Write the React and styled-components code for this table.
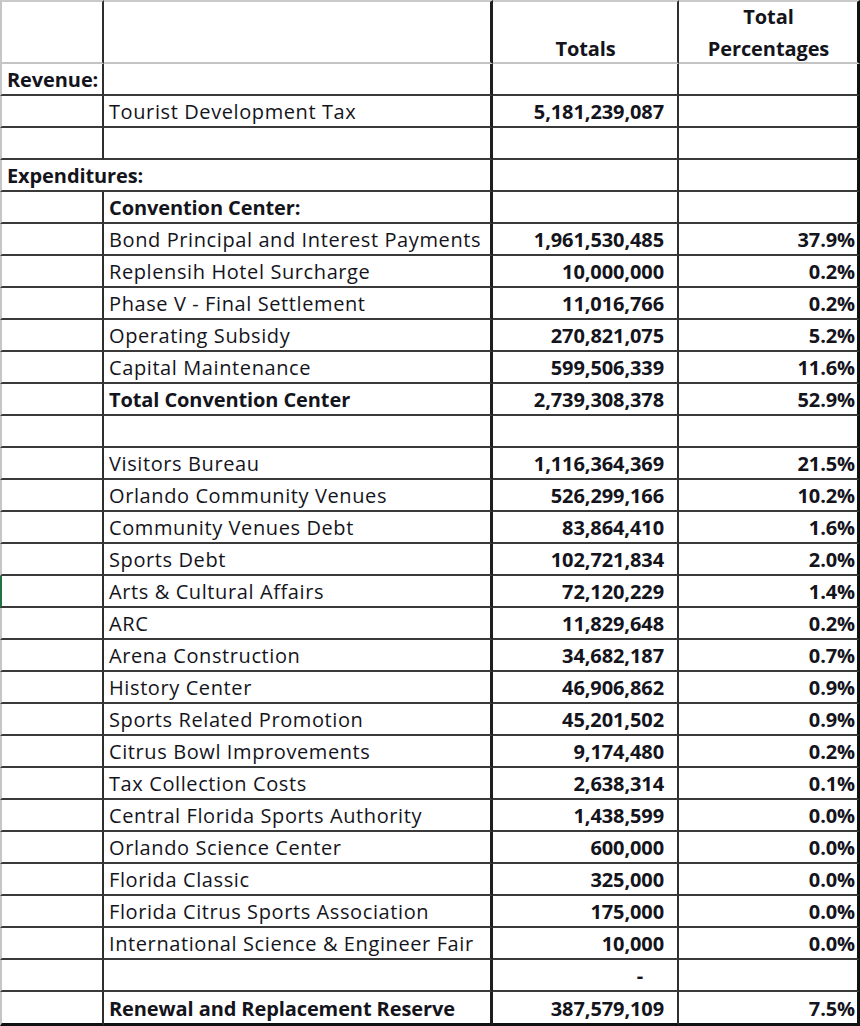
import React from "react";
import styled, { createGlobalStyle } from "styled-components";

const GlobalStyle = createGlobalStyle`
  html, body {
    margin: 0;
    padding: 0;
    background: #ffffff;
  }
`;

const RIGHT_RULES = {
  1: "2px solid #2e2e2e",
  2: "3px solid #1e1e1e",
  3: "2px solid #2e2e2e",
  4: "3px solid #111111",
};

const Sheet = styled.div`
  display: grid;
  grid-template-columns: 104px 389px 186px 181px;
  width: 860px;
  font-family: "Open Sans", Lato, sans-serif;
  font-size: 20px;
  color: #14141c;
`;

const Cell = styled.div`
  box-sizing: border-box;
  height: ${(p) => (p.$head ? 64 : p.$last ? 34 : 32)}px;
  grid-column: span ${(p) => p.$span || 1};
  display: flex;
  align-items: flex-end;
  justify-content: ${(p) =>
    p.$align === "right" ? "flex-end" : p.$align === "center" ? "center" : "flex-start"};
  text-align: ${(p) => p.$align || "left"};
  padding: 0 ${(p) => (p.$padRight != null ? p.$padRight : 4)}px 0 5px;
  font-weight: ${(p) => (p.$bold ? 700 : 400)};
  letter-spacing: ${(p) => (p.$bold ? "-0.1px" : "0.6px")};
  line-height: 29px;
  white-space: nowrap;
  border-right: ${(p) => RIGHT_RULES[p.$col]};
  border-left: ${(p) =>
    p.$col === 1 ? (p.$marker ? "2px solid #217346" : "2px solid #c6c6c6") : "none"};
  border-top: ${(p) => (p.$head ? "2px solid #cacaca" : "none")};
  border-bottom: ${(p) =>
    p.$head ? "2px solid #c4c4c4" : p.$last ? "3px solid #111111" : "2px solid #3a3a3a"};
`;

const HeadText = styled.span`
  line-height: 32px;
  font-weight: 700;
  letter-spacing: -0.1px;
  margin-bottom: -3px;
`;

const rows = [
  { type: "section", label: "Revenue:" },
  { label: "Tourist Development Tax", total: "5,181,239,087" },
  { type: "blank" },
  { type: "wide", label: "Expenditures:" },
  { label: "Convention Center:", bold: true },
  { label: "Bond Principal and Interest Payments", total: "1,961,530,485", pct: "37.9%" },
  { label: "Replensih Hotel Surcharge", total: "10,000,000", pct: "0.2%" },
  { label: "Phase V - Final Settlement", total: "11,016,766", pct: "0.2%" },
  { label: "Operating Subsidy", total: "270,821,075", pct: "5.2%" },
  { label: "Capital Maintenance", total: "599,506,339", pct: "11.6%" },
  { label: "Total Convention Center", bold: true, total: "2,739,308,378", pct: "52.9%" },
  { type: "blank" },
  { label: "Visitors Bureau", total: "1,116,364,369", pct: "21.5%" },
  { label: "Orlando Community Venues", total: "526,299,166", pct: "10.2%" },
  { label: "Community Venues Debt", total: "83,864,410", pct: "1.6%" },
  { label: "Sports Debt", total: "102,721,834", pct: "2.0%" },
  { label: "Arts & Cultural Affairs", total: "72,120,229", pct: "1.4%", marker: true },
  { label: "ARC", total: "11,829,648", pct: "0.2%" },
  { label: "Arena Construction", total: "34,682,187", pct: "0.7%" },
  { label: "History Center", total: "46,906,862", pct: "0.9%" },
  { label: "Sports Related Promotion", total: "45,201,502", pct: "0.9%" },
  { label: "Citrus Bowl Improvements", total: "9,174,480", pct: "0.2%" },
  { label: "Tax Collection Costs", total: "2,638,314", pct: "0.1%" },
  { label: "Central Florida Sports Authority", total: "1,438,599", pct: "0.0%" },
  { label: "Orlando Science Center", total: "600,000", pct: "0.0%" },
  { label: "Florida Classic", total: "325,000", pct: "0.0%" },
  { label: "Florida Citrus Sports Association", total: "175,000", pct: "0.0%" },
  { label: "International Science & Engineer Fair", total: "10,000", pct: "0.0%" },
  { type: "dash" },
  { label: "Renewal and Replacement Reserve", bold: true, total: "387,579,109", pct: "7.5%", last: true },
];

function Row({ row }) {
  const { type, label, bold, total, pct, marker, last } = row;

  if (type === "wide") {
    return (
      <>
        <Cell $col={2} $span={2} $bold style={{ borderLeft: "2px solid #c6c6c6" }}>
          {label}
        </Cell>
        <Cell $col={3} />
        <Cell $col={4} />
      </>
    );
  }

  return (
    <>
      <Cell $col={1} $bold={type === "section"} $marker={marker} $last={last}>
        {type === "section" ? label : ""}
      </Cell>
      <Cell $col={2} $bold={bold} $last={last}>
        {type === "section" ? "" : label}
      </Cell>
      <Cell
        $col={3}
        $align="right"
        $bold
        $padRight={type === "dash" ? 34 : 13}
        $last={last}
      >
        {type === "dash" ? "-" : total}
      </Cell>
      <Cell $col={4} $align="right" $bold $padRight={2} $last={last}>
        {pct}
      </Cell>
    </>
  );
}

export default function App() {
  return (
    <>
      <GlobalStyle />
      <Sheet>
        <Cell $head $col={1} />
        <Cell $head $col={2} />
        <Cell $head $col={3} $align="center">
          <HeadText>Totals</HeadText>
        </Cell>
        <Cell $head $col={4} $align="center">
          <HeadText>
            Total
            <br />
            Percentages
          </HeadText>
        </Cell>
        {rows.map((row, i) => (
          <Row key={i} row={row} />
        ))}
      </Sheet>
    </>
  );
}
